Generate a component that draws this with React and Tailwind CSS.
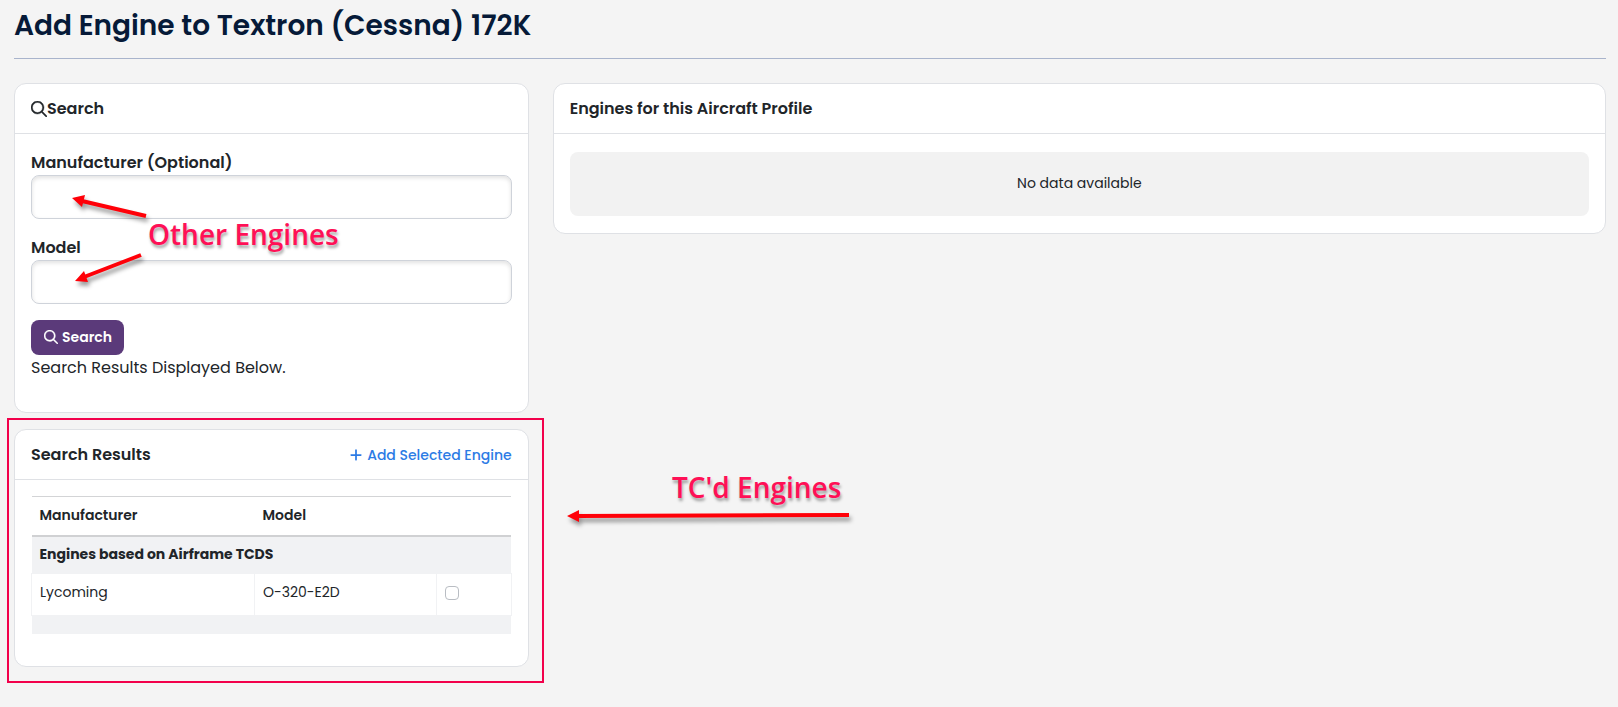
import { FaPlus } from "react-icons/fa6";

function SearchIcon({ className }) {
  return (
    <svg viewBox="0 0 512 512" fill="currentColor" stroke="currentColor" strokeWidth="12" className={className} aria-hidden="true">
      <path d="M368 208A160 160 0 1 0 48 208a160 160 0 1 0 320 0zM337.1 371.1C301.7 399.2 256.8 416 208 416 93.1 416 0 322.9 0 208S93.1 0 208 0s208 93.1 208 208c0 48.8-16.8 93.7-44.9 129.1L505 471c9.400 9.400 9.400 24.600 0 33.900s-24.600 9.400-33.900 0L337.100 371.100z" />
    </svg>
  );
}

function Card({ title, action, children, className = "" }) {
  return (
    <section className={`rounded-xl border border-[#dfe1e5] bg-white ${className}`}>
      <header className="flex h-[50px] items-center justify-between border-b border-[#dfe1e5] px-4">
        <h2 className="flex items-center text-base font-semibold">{title}</h2>
        {action}
      </header>
      {children}
    </section>
  );
}

function Field({ id, label }) {
  return (
    <div className="mb-4 flex flex-col">
      <label htmlFor={id} className="text-base leading-[25px] font-semibold">{label}</label>
      <input
        id={id}
        type="text"
        className="h-11 rounded-lg border border-[#cfd3da] bg-white px-3 inset-shadow-[0_2px_4px_rgba(0,0,0,0.12)]"
      />
    </div>
  );
}

export default function App() {
  return (
    <main className="relative min-h-screen bg-[#f4f4f4] pt-1 pr-3 pl-3.5 font-['Poppins','Inter',sans-serif] text-[#212529]">
      <h1 className="text-[28px] leading-11 font-semibold text-[#061a38]">
        Add Engine to Textron (Cessna) 172K
      </h1>
      <hr className="mt-2.5 mb-6 border-[#a9b4cc]" />

      <div className="grid grid-cols-3 items-start gap-6">
        <div className="flex flex-col gap-4">
          <Card title={<><SearchIcon className="size-4" />Search</>}>
            <form className="px-4 pt-4 pb-8" onSubmit={(e) => e.preventDefault()}>
              <Field id="manufacturer" label="Manufacturer (Optional)" />
              <Field id="model" label="Model" />
              <button type="submit" className="flex h-[35px] items-center gap-1 rounded-lg bg-[#5b3a7a] pr-3 pb-0.5 pl-[13px] text-sm font-semibold text-white">
                <SearchIcon className="size-3.5" />
                Search
              </button>
              <p className="text-base leading-[25px]">Search Results Displayed Below.</p>
            </form>
          </Card>

          <Card
            title="Search Results"
            action={
              <button type="button" className="flex items-center gap-1 text-sm font-medium text-[#2c7be5]">
                <FaPlus className="size-3.5" />
                Add Selected Engine
              </button>
            }
          >
            <div className="px-4 pt-4 pb-8">
              <table className="w-full border-collapse text-left text-sm">
                <thead>
                  <tr className="h-[39px] border-t border-b-2 border-t-[#d3d4d6] border-b-[#d0d1d3]">
                    <th className="w-[46.5%] px-2 pb-0.5 font-semibold">Manufacturer</th>
                    <th className="w-[38%] px-2 pb-0.5 font-semibold">Model</th>
                    <th className="px-2" aria-label="Select" />
                  </tr>
                </thead>
                <tbody>
                  <tr className="h-[38px] bg-[#f1f2f4]">
                    <th colSpan={3} className="px-2 pb-0.5 font-bold">Engines based on Airframe TCDS</th>
                  </tr>
                  <tr className="h-[42px] align-top">
                    <td className="border border-[#f1f2f4] px-2 pt-2">Lycoming</td>
                    <td className="border border-[#f1f2f4] px-2 pt-2">O-320-E2D</td>
                    <td className="border border-[#f1f2f4] px-2 pt-3">
                      <input
                        type="checkbox"
                        aria-label="Select Lycoming O-320-E2D"
                        className="block size-3.5 appearance-none rounded-sm border border-[#b9bdc3] bg-white checked:bg-[#2c7be5]"
                      />
                    </td>
                  </tr>
                  <tr className="h-[18px] bg-[#f1f2f4]">
                    <td colSpan={3} />
                  </tr>
                </tbody>
              </table>
            </div>
          </Card>
        </div>

        <Card title="Engines for this Aircraft Profile" className="col-span-2">
          <div className="px-4 pt-[18px] pb-[17px]">
            <div className="flex h-16 items-center justify-center rounded-lg bg-[#f2f2f2] pb-0.5 text-sm">No data available</div>
          </div>
        </Card>
      </div>

      <div className="pointer-events-none absolute top-[418px] left-[7px] h-[265px] w-[537px] border-2 border-[#f2004b]" />
      <p className="absolute top-[216px] left-[148px] font-['Trebuchet_MS','Open_Sans',sans-serif] text-[28px] leading-9 font-semibold text-[#ff1056] text-shadow-[1px_3px_3px_rgba(0,0,0,0.35)]">
        Other Engines
      </p>
      <p className="absolute top-[469px] left-[672px] font-['Trebuchet_MS','Open_Sans',sans-serif] text-[28px] leading-9 font-semibold text-[#ff1056] text-shadow-[1px_3px_3px_rgba(0,0,0,0.35)]">
        TC'd Engines
      </p>
      <svg
        className="pointer-events-none absolute top-0 left-0 drop-shadow-[2px_4px_2px_rgba(0,0,0,0.4)]"
        width="870"
        height="540"
        fill="#ff0008"
        stroke="#ff0008"
        aria-hidden="true"
      >
        <path d="M146 216 82 201M141 255 84 277M849 515 577 516" strokeWidth="4" />
        <path stroke="none" d="M72 198 85 195 82 207ZM75 281 84 271 88 282ZM567 516 579 510V522Z" />
      </svg>
    </main>
  );
}
